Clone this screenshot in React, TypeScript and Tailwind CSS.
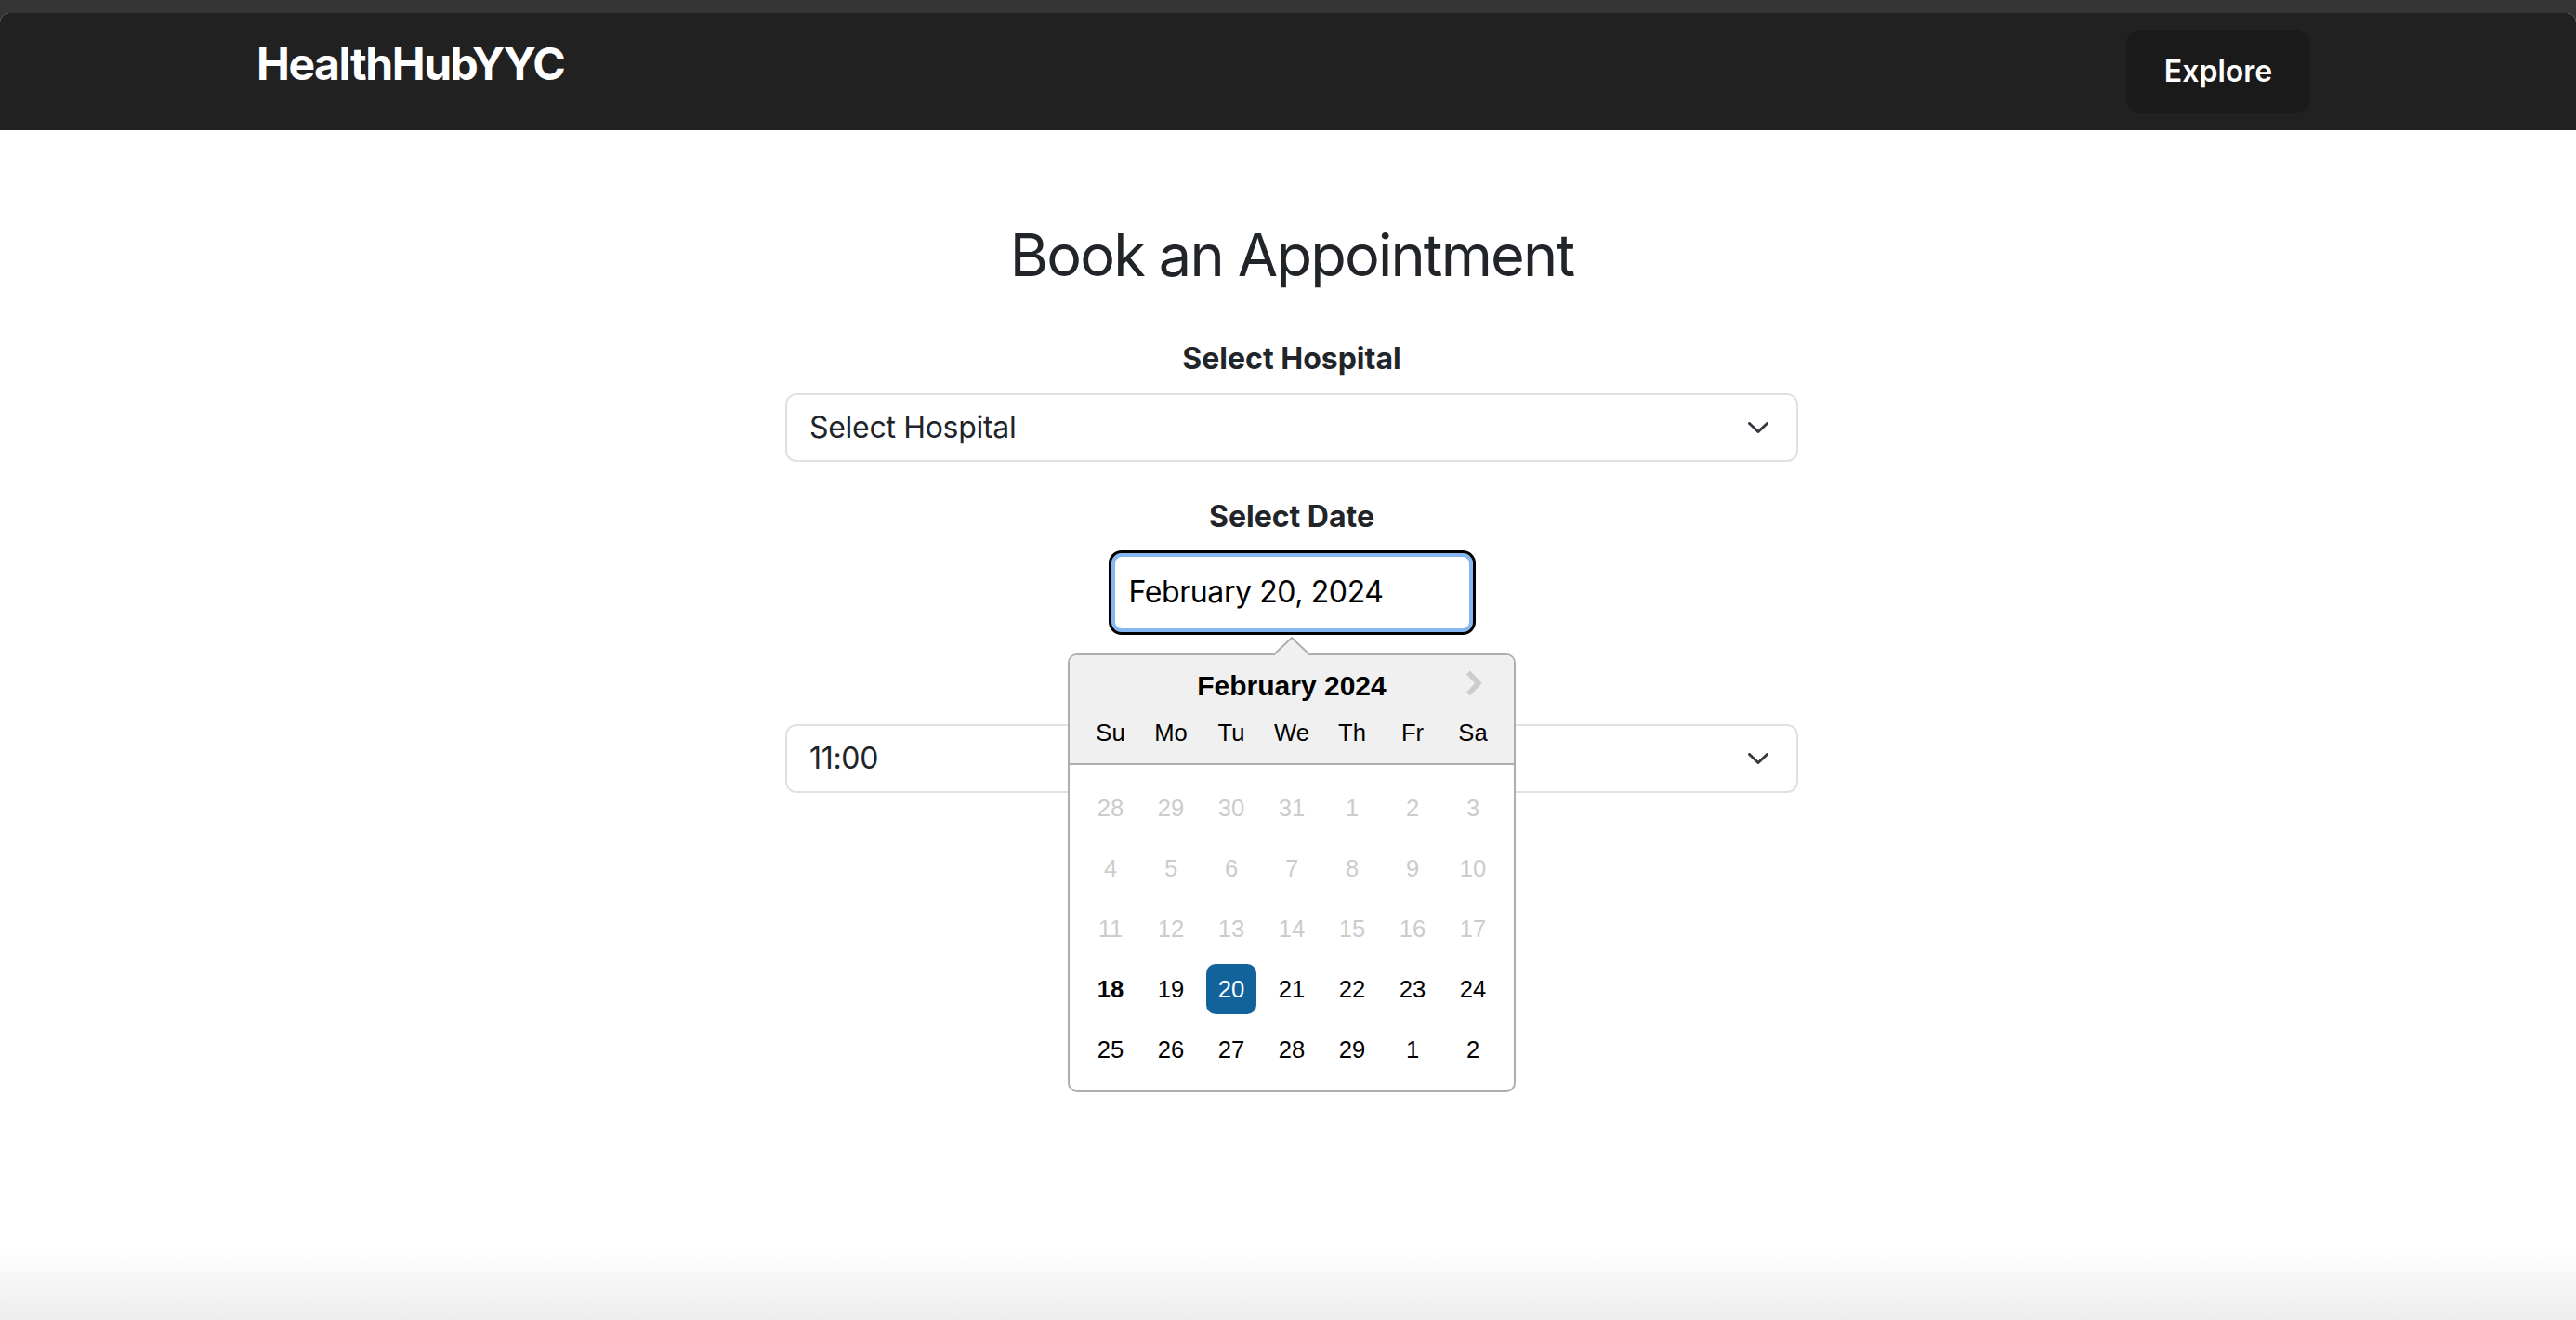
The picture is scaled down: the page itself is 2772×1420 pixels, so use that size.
import { ChevronDown } from 'lucide-react'

type Day = { n: number; muted?: boolean; today?: boolean; selected?: boolean }

const DAY_NAMES = ['Su', 'Mo', 'Tu', 'We', 'Th', 'Fr', 'Sa']

// Feb 2024 grid as the picker shows it: past days are disabled
const WEEKS: Day[][] = [
  [28, 29, 30, 31, 1, 2, 3].map((n) => ({ n, muted: true })),
  [4, 5, 6, 7, 8, 9, 10].map((n) => ({ n, muted: true })),
  [11, 12, 13, 14, 15, 16, 17].map((n) => ({ n, muted: true })),
  [
    { n: 18, today: true },
    { n: 19 },
    { n: 20, selected: true },
    { n: 21 },
    { n: 22 },
    { n: 23 },
    { n: 24 },
  ],
  [25, 26, 27, 28, 29, 1, 2].map((n) => ({ n })),
]

function SelectBox({ value }: { value: string }) {
  return (
    <div className="w-[1090px] h-[74px] border-2 border-[#dee2e6] rounded-[12px] bg-white flex items-center pl-[24px] pr-[30px] text-[32px] tracking-[-0.3px] text-[#212529]">
      <span className="flex-1">{value}</span>
      <svg width="22" height="12" viewBox="0 0 22 12" fill="none" className="shrink-0">
        <path d="M1.5 1.5 11 10.5 20.5 1.5" stroke="#343a40" strokeWidth="3" strokeLinecap="round" strokeLinejoin="round" />
      </svg>
    </div>
  )
}

function Label({ children, className = '' }: { children: React.ReactNode; className?: string }) {
  return <div className={`text-[32px] leading-[48px] font-bold text-[#212529] ${className}`}>{children}</div>
}

function Calendar() {
  return (
    <div className="absolute top-full left-1/2 -translate-x-1/2 mt-[20px] z-10 w-[482px] border-2 border-[#aeaeae] rounded-[10px] bg-white font-['Liberation_Sans',Arial,sans-serif] text-black">
      {/* little arrow pointing at the input */}
      <svg width="36" height="21" viewBox="0 0 36 21" className="absolute -top-[20px] left-1/2 -translate-x-1/2">
        <polygon points="0,19 18,1 36,19 36,21 0,21" fill="#f0f0f0" />
        <polyline points="-1,19 18,1 37,19" fill="none" stroke="#aeaeae" strokeWidth="2" />
      </svg>
      <div className="relative bg-[#f0f0f0] border-b-2 border-[#aeaeae] rounded-t-[8px] pt-[15px] pb-[1px]">
        <div className="h-[36px] leading-[36px] text-center text-[30px] font-bold">February 2024</div>
        <svg width="22" height="28" viewBox="0 0 22 28" className="absolute left-[426px] top-[16px]">
          <polyline points="3,2.5 14,14 3,25.5" fill="none" stroke="#cccccc" strokeWidth="5.5" />
        </svg>
        <div className="grid grid-cols-7 gap-x-[11px] px-[17px] my-[5px]">
          {DAY_NAMES.map((d) => (
            <div key={d} className="h-[54px] leading-[54px] text-center text-[25.6px]">
              {d}
            </div>
          ))}
        </div>
      </div>
      <div className="grid grid-cols-7 gap-x-[11px] gap-y-[11px] px-[17px] pt-[19px] pb-[17px]">
        {WEEKS.flat().map((d, i) => (
          <div
            key={i}
            className={`h-[54px] leading-[54px] text-center text-[25.6px] rounded-[10px] ${
              d.selected ? 'bg-[#12639c] text-white' : d.muted ? 'text-[#cccccc]' : 'text-black'
            } ${d.today ? 'font-bold' : ''}`}
          >
            {d.n}
          </div>
        ))}
      </div>
    </div>
  )
}

export default function App() {
  return (
    <div className="w-full h-[1420px] bg-[#353535] pt-[14px] flex flex-col overflow-hidden font-['Inter',sans-serif]">
      <div className="flex-1 flex flex-col bg-white rounded-t-[10px] overflow-hidden">
        <nav className="h-[126px] shrink-0 bg-[#212121] flex items-start justify-between pl-[276px] pr-[286px]">
          <div className="mt-[31px] text-[48px] leading-[48px] font-bold text-white tracking-[-1.4px]">HealthHubYYC</div>
          <button
            type="button"
            className="mt-[18px] w-[198px] h-[90px] rounded-[16px] bg-[#1a1a1a] text-white text-[32px] font-semibold"
          >
            Explore
          </button>
        </nav>

        <main className="flex-1 flex flex-col">
          <div className="flex-1 flex flex-col items-center pl-[8px]">
            <h2 className="mt-[97px] text-[63px] leading-[1.2] font-normal tracking-[-1.8px] text-[#212529]">
              Book an Appointment
            </h2>

            <Label className="mt-[49px]">Select Hospital</Label>
            <div className="mt-[13px]">
              <SelectBox value="Select Hospital" />
            </div>

            <Label className="mt-[35px]">Select Date</Label>
            <div className="relative mt-[12px]">
              <div className="w-[395px] h-[91px] border-[3px] border-black rounded-[14px] shadow-[inset_0_0_0_4px_#86b7f3] bg-white flex items-center pl-[19px] text-[32px] tracking-[-0.4px] text-black">
                February 20, 2024
              </div>
              <Calendar />
            </div>

            <Label className="mt-[36px]">Select Time</Label>
            <div className="mt-[12px]">
              <SelectBox value="11:00" />
            </div>
          </div>
          <div className="h-[80px] shrink-0 bg-linear-to-b from-white to-[#ededed]" />
        </main>
      </div>
    </div>
  )
}
